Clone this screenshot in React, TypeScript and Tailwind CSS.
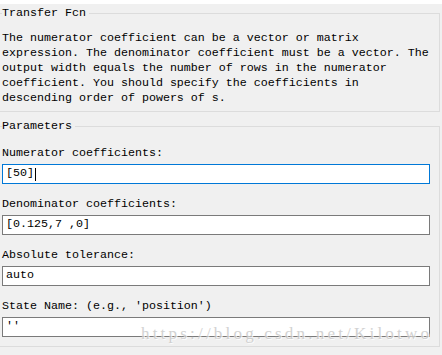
import React from "react";

const mono = { fontFamily: '"Liberation Mono", "DejaVu Sans Mono", monospace' };

function Field({ label, value, active }: { label: string; value: string; active?: boolean }) {
  return (
    <div className="flex flex-col">
      <div className="h-[16px] leading-[16px] pl-[2px] text-[11.67px] text-black whitespace-pre">{label}</div>
      <div
        className={
          "mt-[3px] ml-[2px] w-[428px] h-[20px] bg-white border flex items-center pl-[3px] text-[11.67px] text-black whitespace-pre " +
          (active ? "border-[#0078d7]" : "border-[#7a7a7a]")
        }
      >
        {value}
        {active && <span className="inline-block w-px h-[13px] bg-black ml-px" />}
      </div>
    </div>
  );
}

export default function App() {
  return (
    <div className="relative w-[442px] h-[355px] bg-[#f0f0f0] overflow-hidden" style={mono}>
      <div className="h-[4px] bg-white" />
      <div className="h-[9px]" />
      {/* Group 1 */}
      <div className="relative w-[440px] border-t border-r border-b border-[#dcdcdc] h-[99px]">
        <div className="absolute -top-[9px] left-[2px] pr-[3px] bg-[#f0f0f0] h-[16px] leading-[16px] text-[11.67px] text-black">
          Transfer Fcn
        </div>
        <div className="pt-[17px] pl-[2px] text-[11.67px] leading-[15px] text-black whitespace-pre">
          <div>The numerator coefficient can be a vector or matrix</div>
          <div>expression. The denominator coefficient must be a vector. The</div>
          <div>output width equals the number of rows in the numerator</div>
          <div>coefficient. You should specify the coefficients in</div>
          <div>descending order of powers of s.</div>
        </div>
      </div>
      <div className="h-[14px]" />
      {/* Group 2 */}
      <div className="relative w-[440px] border-t border-r border-b border-[#dcdcdc] h-[221px]">
        <div className="absolute -top-[9px] left-[2px] pr-[3px] bg-[#f0f0f0] h-[16px] leading-[16px] text-[11.67px] text-black">
          Parameters
        </div>
        <div className="pt-[18px] flex flex-col gap-[12px]">
          <Field label="Numerator coefficients:" value="[50]" active />
          <Field label="Denominator coefficients:" value="[0.125,7 ,0]" />
          <Field label="Absolute tolerance:" value="auto" />
          <Field label="State Name: (e.g., 'position')" value="''" />
        </div>
      </div>
      <div
        className="absolute left-[141px] top-[321px] text-[17px] tracking-[3.2px] text-[#c8c8c8] opacity-80 whitespace-pre"
        style={{ fontFamily: '"Liberation Serif", serif', textShadow: "0 0 1px #ffffff, 1px 1px 0 #ffffff" }}
      >
        https://blog.csdn.net/Kilotwo
      </div>
    </div>
  );
}
